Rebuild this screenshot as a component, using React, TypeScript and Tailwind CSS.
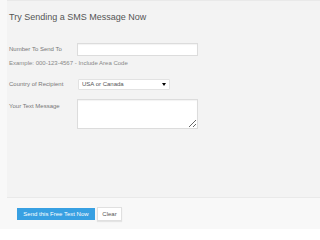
const labelCls = 'w-[68px] shrink-0 text-[6px] leading-[7px] text-[#777]';

export default function App() {
  return (
    <div className="w-full min-w-[220px] h-[229px] bg-[#f8f8f8] font-['Liberation_Sans',Arial,sans-serif] overflow-hidden">
      <div className="ml-[7px] h-[198px] bg-[#f3f3f3] border-t border-b border-[#e9e9e9] pl-[2px] pt-[11px]">
        <h1 className="text-[9px] leading-[10px] text-[#555] font-normal">Try Sending a SMS Message Now</h1>

        <form className="mt-[21px]">
          <div className="flex items-center">
            <label htmlFor="num" className={labelCls}>Number To Send To</label>
            <input
              id="num"
              type="text"
              className="block w-[121px] h-[13px] bg-white border border-[#dcdcdc] shadow-[inset_0_1px_1px_rgba(0,0,0,0.05)] outline-none"
            />
          </div>
          <p className="mt-[4px] text-[6px] leading-[7px] text-[#888]">Example: 000-123-4567 - Include Area Code</p>

          <div className="flex items-center mt-[12px]">
            <label htmlFor="country" className={labelCls}>Country of Recipient</label>
            <div className="relative ml-[1px] h-[11px]">
              <select
                id="country"
                defaultValue="us"
                className="block appearance-none w-[92px] h-[11px] bg-white border border-[#e2e2e2] rounded-[1px] pl-[3px] py-0 text-[6px] leading-[9px] text-[#555] outline-none"
              >
                <option value="us">USA or Canada</option>
              </select>
              <span className="absolute right-[4px] top-[4px] w-0 h-0 border-l-[2px] border-r-[2px] border-t-[3px] border-l-transparent border-r-transparent border-t-black pointer-events-none" />
            </div>
          </div>

          <div className="flex items-start mt-[9px]">
            <label htmlFor="msg" className={`${labelCls} mt-[4px]`}>Your Text Message</label>
            <textarea
              id="msg"
              className="block w-[121px] h-[30px] bg-white border border-[#dcdcdc] shadow-[inset_0_1px_1px_rgba(0,0,0,0.05)] outline-none text-[6px]"
            />
          </div>
        </form>
      </div>

      <div className="flex items-center gap-[2px] pl-[17px] pt-[9px]">
        <button className="w-[78px] h-[12px] bg-[#38a0e2] text-white text-[6px] leading-[12px] text-center">
          Send this Free Text Now
        </button>
        <button className="w-[25px] h-[14px] bg-white border border-[#e0e0e0] shadow-[0_1px_1px_rgba(0,0,0,0.08)] text-[#555] text-[6px] leading-[12px] text-center">
          Clear
        </button>
      </div>
    </div>
  );
}
